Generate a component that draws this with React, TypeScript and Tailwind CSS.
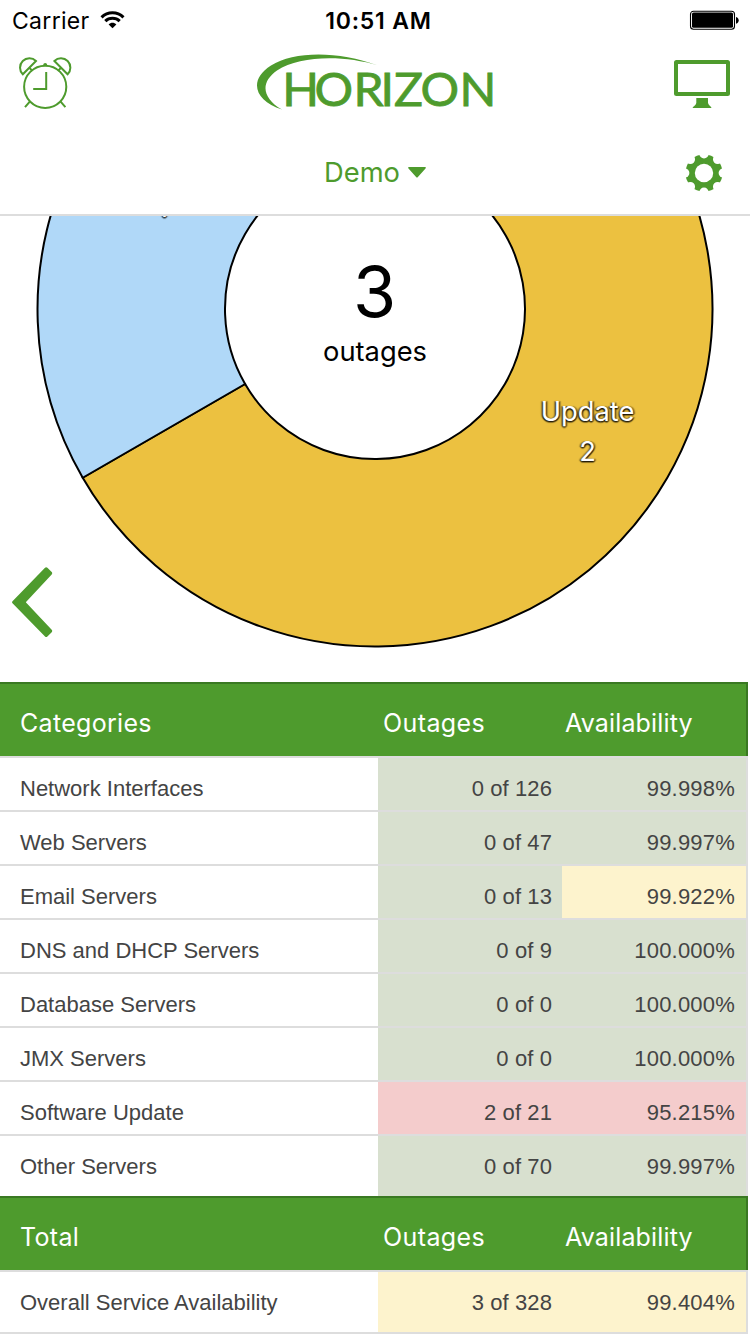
import React from 'react';

type Tone = 'ok' | 'warn' | 'bad';

interface Row {
  name: string;
  outages: string;
  availability: string;
  outageTone: Tone;
  availabilityTone: Tone;
}

const toneClass: Record<Tone, string> = {
  ok: 'bg-[#d8e0cf]',
  warn: 'bg-[#fdf3cd]',
  bad: 'bg-[#f4cccc]',
};

const categories: Row[] = [
  { name: 'Network Interfaces', outages: '0 of 126', availability: '99.998%', outageTone: 'ok', availabilityTone: 'ok' },
  { name: 'Web Servers', outages: '0 of 47', availability: '99.997%', outageTone: 'ok', availabilityTone: 'ok' },
  { name: 'Email Servers', outages: '0 of 13', availability: '99.922%', outageTone: 'ok', availabilityTone: 'warn' },
  { name: 'DNS and DHCP Servers', outages: '0 of 9', availability: '100.000%', outageTone: 'ok', availabilityTone: 'ok' },
  { name: 'Database Servers', outages: '0 of 0', availability: '100.000%', outageTone: 'ok', availabilityTone: 'ok' },
  { name: 'JMX Servers', outages: '0 of 0', availability: '100.000%', outageTone: 'ok', availabilityTone: 'ok' },
  { name: 'Software Update', outages: '2 of 21', availability: '95.215%', outageTone: 'bad', availabilityTone: 'bad' },
  { name: 'Other Servers', outages: '0 of 70', availability: '99.997%', outageTone: 'ok', availabilityTone: 'ok' },
];

const total: Row = {
  name: 'Overall Service Availability',
  outages: '3 of 328',
  availability: '99.404%',
  outageTone: 'warn',
  availabilityTone: 'warn',
};

function StatusBar() {
  return (
    <div className="grid h-10 grid-cols-3 items-center pl-3 pr-[11px] text-[23px] leading-[38px] text-black">
      <div className="flex items-center gap-[10px]">
        <span className="pt-[2px] tracking-[0.3px]">Carrier</span>
        <svg width="25" height="20" viewBox="0 0 26 20" fill="none" stroke="#000" strokeWidth="3.2">
          <path d="M1.6 7.2 C8 0.9 18 0.9 24.4 7.2" />
          <path d="M5.5 11.2 C9.6 7.2 16.4 7.2 20.5 11.2" />
          <path d="M9 14.6 C11.2 12.4 14.8 12.4 17 14.6 L13 18.6 Z" fill="#000" stroke="none" />
        </svg>
      </div>
      <span className="whitespace-nowrap pl-[6px] pt-[2px] text-center font-semibold tracking-[0.8px]">10:51 AM</span>
      <svg className="justify-self-end" width="50" height="20" viewBox="0 0 50 20">
        <rect x="1.5" y="1.2" width="44" height="18" rx="3" fill="none" stroke="#000" strokeWidth="1.1" />
        <rect x="3" y="2.6" width="41" height="15.2" rx="1.6" />
        <path d="M47 6.9 C50.6 7.6 50.6 13 47 13.7 Z" />
      </svg>
    </div>
  );
}

function AlarmIcon() {
  return (
    <svg className="overflow-visible" width="52" height="50" viewBox="0 0 52 50" fill="none" stroke="#4e9b2d" strokeWidth="2">
      <circle cx="25.2" cy="28.8" r="21.1" />
      <path d="M26.2 14 V31 H13.2" />
      <path d="M2.800 16.300 A9.300 9.300 0 0 1 16 3 Z" />
      <path d="M47.600 16.300 A9.300 9.300 0 0 0 34.400 3 Z" />
      <path d="M9.5 9.9 L12.2 12.8 M40.9 9.9 L38.2 12.8 M10 43.3 L5 49.2 M40.4 43.3 L45.4 49.2" />
      <path d="M23.2 7.2 C23.2 4.2 27.2 4.2 27.2 7.2 Z" fill="#4e9b2d" stroke="none" />
    </svg>
  );
}

function Logo() {
  return (
    <svg className="overflow-visible" width="240" height="60" viewBox="255 52 240 60" fill="#4e9b2d">
      <path d="M378 65.6 C338 50.5 294 51 271 65.5 C248 80 254.500 101 282 109.600 C262 98 260 82.500 277 70.500 C300 55.500 344 55 378 65.600 Z" />
      <text
        transform="scale(1.06 1)"
        y="106"
        x="266.200 296.600 333.600 358.900 371.700 396.700 433.400"
        fontFamily="Lato, sans-serif"
        fontWeight="400"
        fontSize="45.500"
        stroke="#4e9b2d"
        strokeWidth="0.800"
      >
        HORIZON
      </text>
    </svg>
  );
}

function MonitorIcon() {
  return (
    <svg width="56" height="50" viewBox="0 0 56 50" fill="#4e9b2d">
      <rect x="2" y="3" width="52" height="32" rx="0.5" fill="none" stroke="#4e9b2d" strokeWidth="4" />
      <path d="M22.300 39 H34 V44 C34.500 46.500 37 47.200 37.600 49 H18.500 C19.200 47.200 22 46.500 22.300 44 Z" />
    </svg>
  );
}

const notches = [0, 45, 90, 135, 180, 225, 270, 315];

function GearIcon() {
  return (
    <svg width="38" height="38" viewBox="-19 -19 38 38">
      <circle r="18.600" fill="#4e9b2d" />
      {notches.map((a) => (
        <circle key={a} cy="-19.300" r="4.700" fill="#fff" transform={`rotate(${a})`} />
      ))}
      <circle r="9.200" fill="#fff" />
    </svg>
  );
}

function Header() {
  return (
    <header className="h-[216px] border-b-2 border-[#dddddd] bg-white">
      <StatusBar />
      <div className="flex h-[88px] items-start justify-between pl-5 pr-5">
        <div className="w-[56px] pt-[18px]">
          <AlarmIcon />
        </div>
        <div className="pt-3">
          <Logo />
        </div>
        <div className="pt-[19px]">
          <MonitorIcon />
        </div>
      </div>
      <div className="grid h-[86px] grid-cols-3 items-center pb-[4px] pt-[8px]">
        <span />
        <div className="flex items-center justify-center gap-2 text-[#4e9b2d]">
          <span className="text-[27.300px] leading-9">Demo</span>
          <svg className="-mt-[2px]" width="18" height="11" viewBox="0 0 18 11" fill="#4e9b2d">
            <path d="M1 0 H17 Q18.500 0.300 17.500 1.500 L9.700 10.200 Q9 11 8.300 10.200 L0.500 1.500 Q-0.500 0.300 1 0 Z" />
          </svg>
        </div>
        <div className="justify-self-end pr-[27px]">
          <GearIcon />
        </div>
      </div>
    </header>
  );
}

const labelShadow = '[text-shadow:-1px_1px_1px_rgba(0,0,0,0.55),1px_1px_1px_rgba(0,0,0,0.55),-2px_0_1px_rgba(0,0,0,0.3),2px_0_1px_rgba(0,0,0,0.3),0_2px_1px_rgba(0,0,0,0.35)]';

function OutageChart() {
  return (
    <section className="relative h-[466px] overflow-hidden">
      <svg className="block" width="750" height="466" viewBox="0 216 750 466">
        <g stroke="#000" strokeWidth="2">
          <path
            d="M375 -28.500 A337.500 337.500 0 1 1 82.720 477.750 L245.100 384 A150 150 0 1 0 375 159 Z"
            fill="#ecc140"
          />
          <path d="M82.720 477.750 A337.500 337.500 0 0 1 375 -28.500 L375 159 A150 150 0 0 0 245.100 384 Z" fill="#b0d8f8" />
        </g>
        <g textAnchor="middle" fontFamily="Inter, sans-serif">
          <text x="374.500" y="317.300" fontSize="70">3</text>
          <text x="375" y="361" fontSize="27.300">outages</text>
          <g fill="#fff" fontSize="27.300" className={labelShadow}>
            <text x="587.500" y="420.500">Update</text>
            <text x="587.500" y="460.500">2</text>
            <text x="162.500" y="217">1</text>
          </g>
        </g>
      </svg>
      <button aria-label="Previous" className="absolute left-3 top-[351px]">
        <svg width="41" height="71" viewBox="0 0 41 71" fill="#4e9b2d">
          <path d="M0.500 34.200 L33 0.700 Q34.200 -0.400 35.400 0.700 L39.700 5 Q40.700 6.200 39.700 7.400 L13.800 35.200 L39.700 62.800 Q40.700 64 39.700 65.200 L35.400 69.500 Q34.200 70.600 33 69.500 L0.500 36.200 Q-0.400 35.200 0.500 34.200 Z" />
        </svg>
      </button>
    </section>
  );
}

function TableHeader({ title }: { title: string }) {
  return (
    <div className="grid h-[74px] grid-cols-[378px_184px_184px] border-r-2 border-t-2 border-[#3a7922] bg-[#4e9b2d] pt-[3px] text-[25px] leading-[72px] text-white">
      <span className="pl-[20px] tracking-[0.3px]">{title}</span>
      <span className="pl-[5px] tracking-[0.4px]">Outages</span>
      <span className="pl-[3px] tracking-[0.15px]">Availability</span>
    </div>
  );
}

function TableRow({ row, tall }: { row: Row; tall?: boolean }) {
  const height = tall ? 'h-[62px] leading-[58px]' : 'h-[54px] leading-[42px]';
  const pad = tall ? 'pt-[2px]' : 'pt-[10px]';
  return (
    <div
      className={`${height} grid grid-cols-[378px_184px_184px] border-r-2 border-t-2 border-[#dddddd] font-['Liberation_Sans',Arial,sans-serif] text-[22px] text-[#444444]`}
    >
      <span className={`whitespace-nowrap pl-5 ${pad}`}>{row.name}</span>
      <span className={`pr-[10px] text-right tracking-[0.1px] ${pad} ${toneClass[row.outageTone]}`}>{row.outages}</span>
      <span className={`pr-[11px] text-right tracking-[0.2px] ${pad} ${toneClass[row.availabilityTone]}`}>
        {row.availability}
      </span>
    </div>
  );
}

export default function App() {
  return (
    <main className="h-[1334px] w-[750px] overflow-hidden bg-white font-['Inter',sans-serif]">
      <Header />
      <OutageChart />
      <section className="w-[748px]">
        <TableHeader title="Categories" />
        {categories.map((row, i) => (
          <TableRow key={row.name} row={row} tall={i === categories.length - 1} />
        ))}
        <TableHeader title="Total" />
        <TableRow row={total} tall />
        <div className="h-[2px] bg-[#dddddd]" />
      </section>
    </main>
  );
}
